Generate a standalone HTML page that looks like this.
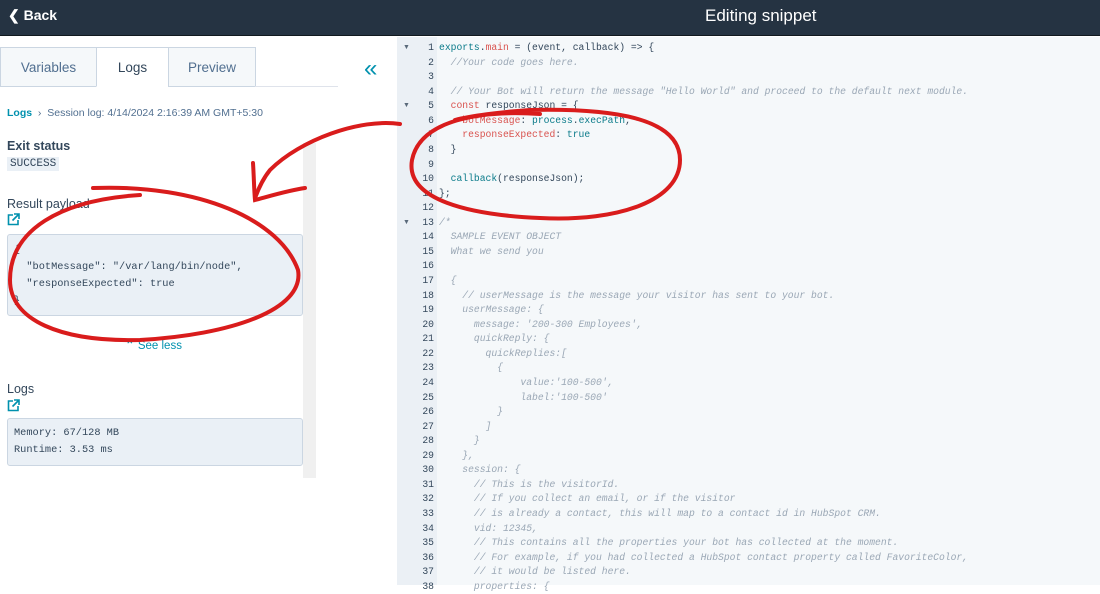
<!DOCTYPE html>
<html><head><meta charset="utf-8"><style>
*{margin:0;padding:0;box-sizing:border-box}
body{width:1100px;height:585px;overflow:hidden;background:#fff;font-family:"Liberation Sans",sans-serif;position:relative}
.top{position:absolute;left:0;top:0;width:1100px;height:36px;background:#253342;border-bottom:1px solid #11191f}
.back{position:absolute;left:8px;top:7px;color:#fff;font-weight:bold;font-size:14px}
.title{position:absolute;left:705px;top:6px;color:#fff;font-size:17px}
.tab{position:absolute;top:0;height:40px;border:1px solid #cbd6e2;background:#f5f8fa;color:#516f90;font-size:13.5px;text-align:center;line-height:40px}
.tabline{position:absolute;top:86px;height:1px;background:#dfe3eb}
.lbl{position:absolute;font-size:12.5px;color:#33475b}
.mono{font-family:"Liberation Mono",monospace}
.box{position:absolute;left:7px;background:#eaf0f6;border:1px solid #cbd6e2;border-radius:3px;font-family:"Liberation Mono",monospace;font-size:10.3px;color:#33475b;line-height:17px;padding:6px 6px}
.ed{position:absolute;left:397px;top:37px;width:703px;height:548px;background:#f5f8fa}
.gut{position:absolute;left:397px;top:37px;width:40px;height:548px;background:#ebf0f5}
.code{position:absolute;left:397px;top:41px;font-family:"Liberation Mono",monospace;font-size:9.7px;line-height:14.56px;white-space:pre}
.ln{display:inline-block;width:37px;text-align:right;color:#33475b;margin-right:5px}
.c{color:#9aa7b5;font-style:italic}
.k{color:#d9534f}
.t{color:#0b7b8a}
.d{color:#33475b}
.f{position:absolute;left:403px;color:#5a6a7a;font-size:7px}
</style></head><body>
<div class="top"><span class="back">&#10094; Back</span><span class="title">Editing snippet</span></div>
<div class="tab" style="left:0;top:47px;width:97px">Variables</div>
<div class="tab" style="left:96px;top:47px;width:73px;background:#fff;color:#33475b;border-bottom-color:#fff">Logs</div>
<div class="tab" style="left:168px;top:47px;width:88px">Preview</div>
<div class="tabline" style="left:255px;width:83px"></div>
<div style="position:absolute;left:364px;top:55px;color:#0091ae;font-size:24px">&#171;</div>
<div class="lbl" style="left:7px;top:107px;font-size:10.5px;color:#516f90"><b style="color:#0091ae;font-weight:bold">Logs</b> &nbsp;›&nbsp; Session log: 4/14/2024 2:16:39 AM GMT+5:30</div>
<div style="position:absolute;left:303px;top:143px;width:13px;height:335px;background:#f0f0f0"></div>
<div class="lbl" style="left:7px;top:139px;font-weight:bold">Exit status</div>
<div style="position:absolute;left:7px;top:157px;background:#eaf0f6;padding:1px 3px;font-size:11px;color:#33475b" class="mono">SUCCESS</div>
<div class="lbl" style="left:7px;top:197px">Result payload</div>
<svg style="position:absolute;left:7px;top:213px" width="13" height="13" fill="none" stroke="#0091ae" stroke-width="1.6"><path d="M6 2H1.5V11.5H11V7M7 1H12V6M12 1L5.5 7.5"/></svg>
<div class="box" style="top:234px;width:296px;height:82px;padding-top:7px">{<br>&nbsp;&nbsp;"botMessage": "/var/lang/bin/node",<br>&nbsp;&nbsp;"responseExpected": true<br>}</div>
<div style="position:absolute;left:125px;top:338px;color:#0091ae;font-size:11.5px">⌃ See less</div>
<div class="lbl" style="left:7px;top:382px">Logs</div>
<svg style="position:absolute;left:7px;top:399px" width="13" height="13" fill="none" stroke="#0091ae" stroke-width="1.6"><path d="M6 2H1.5V11.5H11V7M7 1H12V6M12 1L5.5 7.5"/></svg>
<div class="box" style="top:418px;width:296px;height:48px;line-height:17px">Memory: 67/128 MB<br>Runtime: 3.53 ms</div>
<div class="ed"></div><div class="gut"></div>
<div class="f" style="top:44px">▼</div><div class="f" style="top:102px">▼</div><div class="f" style="top:219px">▼</div>
<div class="code"><span class="ln">1</span><span class="t">exports</span><span class="d">.</span><span class="k">main</span><span class="d"> = (event, callback) => {</span>
<span class="ln">2</span>  <span class="c">//Your code goes here.</span>
<span class="ln">3</span>
<span class="ln">4</span>  <span class="c">// Your Bot will return the message "Hello World" and proceed to the default next module.</span>
<span class="ln">5</span>  <span class="k">const</span><span class="d"> responseJson = {</span>
<span class="ln">6</span>    <span class="k">botMessage</span><span class="d">: </span><span class="t">process</span><span class="d">.</span><span class="t">execPath</span><span class="d">,</span>
<span class="ln">7</span>    <span class="k">responseExpected</span><span class="d">: </span><span class="t">true</span>
<span class="ln">8</span>  <span class="d">}</span>
<span class="ln">9</span>
<span class="ln">10</span>  <span class="t">callback</span><span class="d">(responseJson);</span>
<span class="ln">11</span><span class="d">};</span>
<span class="ln">12</span>
<span class="ln">13</span><span class="c">/*</span>
<span class="ln">14</span><span class="c">  SAMPLE EVENT OBJECT</span>
<span class="ln">15</span><span class="c">  What we send you</span>
<span class="ln">16</span>
<span class="ln">17</span><span class="c">  {</span>
<span class="ln">18</span><span class="c">    // userMessage is the message your visitor has sent to your bot.</span>
<span class="ln">19</span><span class="c">    userMessage: {</span>
<span class="ln">20</span><span class="c">      message: '200-300 Employees',</span>
<span class="ln">21</span><span class="c">      quickReply: {</span>
<span class="ln">22</span><span class="c">        quickReplies:[</span>
<span class="ln">23</span><span class="c">          {</span>
<span class="ln">24</span><span class="c">              value:'100-500',</span>
<span class="ln">25</span><span class="c">              label:'100-500'</span>
<span class="ln">26</span><span class="c">          }</span>
<span class="ln">27</span><span class="c">        ]</span>
<span class="ln">28</span><span class="c">      }</span>
<span class="ln">29</span><span class="c">    },</span>
<span class="ln">30</span><span class="c">    session: {</span>
<span class="ln">31</span><span class="c">      // This is the visitorId.</span>
<span class="ln">32</span><span class="c">      // If you collect an email, or if the visitor</span>
<span class="ln">33</span><span class="c">      // is already a contact, this will map to a contact id in HubSpot CRM.</span>
<span class="ln">34</span><span class="c">      vid: 12345,</span>
<span class="ln">35</span><span class="c">      // This contains all the properties your bot has collected at the moment.</span>
<span class="ln">36</span><span class="c">      // For example, if you had collected a HubSpot contact property called FavoriteColor,</span>
<span class="ln">37</span><span class="c">      // it would be listed here.</span>
<span class="ln">38</span><span class="c">      properties: {</span></div>
<svg style="position:absolute;left:0;top:0" width="1100" height="585" fill="none" stroke="#d91c1c" stroke-width="4" stroke-linecap="round">
<path d="M400 124 C360 118 300 140 270 170 C262 180 258 190 255 198"/>
<path d="M253 163 C254 178 254 190 255 200 C270 196 290 190 305 188"/>
<path d="M540 114 C480 110 420 120 412 160 C405 200 470 215 540 218 C620 222 680 200 680 160 C680 120 620 108 530 110 C500 112 470 116 455 120"/>
<path d="M93 188 C200 184 280 220 298 270 C305 310 230 335 140 340 C60 342 10 320 10 280 C10 230 60 200 140 195"/>
</svg>
</body></html>
